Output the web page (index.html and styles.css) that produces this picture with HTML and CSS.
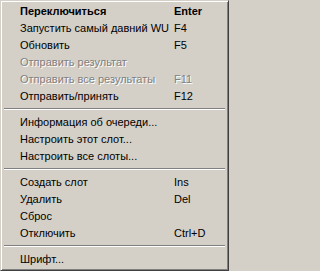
FILE: index.html
```html
<!DOCTYPE html>
<html>
<head>
<meta charset="utf-8">
<link rel="stylesheet" href="styles.css">
</head>
<body>
<div class="menu">
  <div class="item bold"><span class="label">Переключиться</span><span class="key">Enter</span></div>
  <div class="item"><span class="label">Запустить самый давний WU</span><span class="key">F4</span></div>
  <div class="item"><span class="label">Обновить</span><span class="key">F5</span></div>
  <div class="item disabled"><span class="label">Отправить результат</span><span class="key"></span></div>
  <div class="item disabled"><span class="label">Отправить все результаты</span><span class="key">F11</span></div>
  <div class="item"><span class="label">Отправить/принять</span><span class="key">F12</span></div>
  <div class="sep"></div>
  <div class="item"><span class="label">Информация об очереди...</span><span class="key"></span></div>
  <div class="item"><span class="label">Настроить этот слот...</span><span class="key"></span></div>
  <div class="item"><span class="label">Настроить все слоты...</span><span class="key"></span></div>
  <div class="sep"></div>
  <div class="item"><span class="label">Создать слот</span><span class="key">Ins</span></div>
  <div class="item"><span class="label">Удалить</span><span class="key">Del</span></div>
  <div class="item"><span class="label">Сброс</span><span class="key"></span></div>
  <div class="item"><span class="label">Отключить</span><span class="key">Ctrl+D</span></div>
  <div class="sep"></div>
  <div class="item"><span class="label">Шрифт...</span><span class="key"></span></div>
</div>
</body>
</html>
```

FILE: styles.css
```css
html, body {
  margin: 0;
  padding: 0;
  background: #d4d0c8;
}
.menu {
  box-sizing: border-box;
  width: 229px;
  height: 271px;
  background: #d4d0c8;
  border: 1px solid;
  border-color: #d4d0c8 #404040 #404040 #d4d0c8;
  box-shadow: inset 1px 1px 0 #ffffff, inset -1px -1px 0 #808080;
  padding: 2px;
  display: flex;
  flex-direction: column;
  font-family: Tahoma, "Liberation Sans", Arial, sans-serif;
  font-size: 11px;
  color: #000;
}
.item {
  height: 17px;
  line-height: 17px;
  display: grid;
  grid-template-columns: 154px 1fr;
  padding-left: 17px;
  white-space: nowrap;
}
.bold {
  font-weight: bold;
}
.disabled {
  color: #808080;
  text-shadow: 1px 1px 0 #ffffff;
}
.sep {
  height: 9px;
  box-sizing: border-box;
  padding-top: 3px;
  margin: 0 1px;
}
.sep::before {
  content: "";
  display: block;
  height: 1px;
  background: #808080;
  border-bottom: 1px solid #ffffff;
}
```
